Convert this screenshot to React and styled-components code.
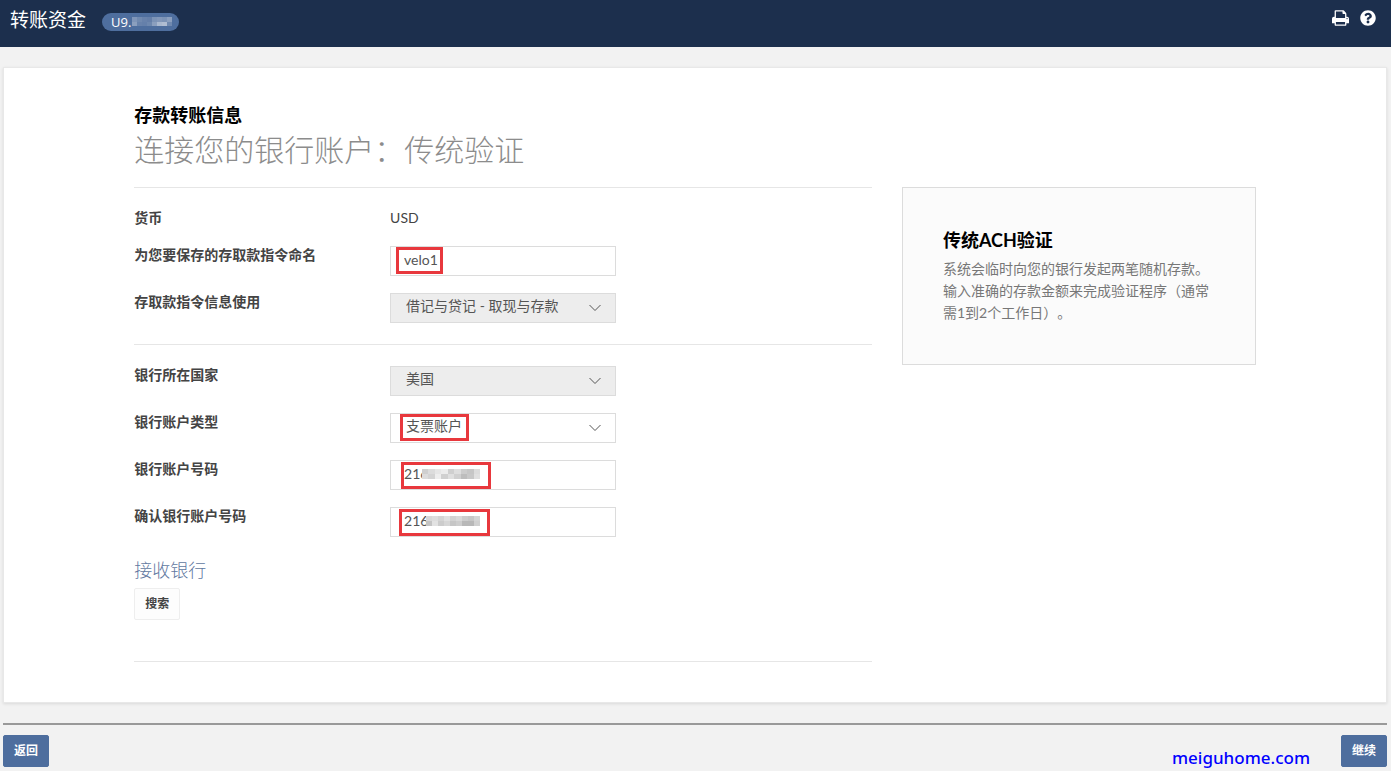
import React, { useState } from "react"
import styled, { createGlobalStyle } from "styled-components"
import { FaQuestionCircle } from "react-icons/fa"

const GlobalStyle = createGlobalStyle`
  * {
    box-sizing: border-box;
  }

  body {
    margin: 0;
    background: #f2f2f2;
    color: #444;
    font-family: Lato, "Noto Sans CJK SC", sans-serif;
    font-size: 14px;
    line-height: 20px;
    text-spacing-trim: space-all;
  }

  h1, h2, h3, p {
    margin: 0;
  }
`

const TopBar = styled.header`
  display: flex;
  align-items: flex-start;
  justify-content: space-between;
  height: 47px;
  padding: 8px 15px 0 10px;
  background: #1c2f4d;
  color: #fff;

  .flex {
    display: flex;
    align-items: center;
    gap: 16px;
  }
  h1 {
    font-size: 19px;
    line-height: 24px;
    font-weight: 400;
  }
`

const AccountPill = styled.span`
  position: relative;
  width: 77px;
  height: 18px;
  margin-top: 4px;
  padding-left: 9px;
  border-radius: 9px;
  background: #4e6e9e;
  font-family: "Open Sans", sans-serif;
  font-size: 13px;
  line-height: 18px;
`

const IconLinks = styled.nav`
  display: flex;
  gap: 11px;
  padding-top: 2px;

  a {
    display: flex;
    color: #fff;
  }
`

const Card = styled.main`
  margin: 20px 4px 0 3px;
  padding: 35px 0 40px;
  border: 1px solid #e8e8e8;
  background: #fff;
  box-shadow: 0 1px 3px rgba(0, 0, 0, 0.1);
`

const Container = styled.div`
  width: 83.3333%;
  margin: 0 auto;
  padding: 0 15px;
`

const Columns = styled.div`
  display: grid;
  grid-template-columns: repeat(12, 1fr);
  column-gap: 30px;
  align-items: start;
  margin-top: 16px;

  form {
    grid-column: span 8;
  }
  aside {
    grid-column: span 4;
  }
`

const Title = styled.h3`
  color: #000;
  font-size: 18px;
  line-height: 24px;
  font-weight: 700;
`

const Subtitle = styled.h2`
  color: #8c8c8c;
  font-size: 30px;
  line-height: 44px;
  font-weight: 300;
`

const Section = styled.div`
  display: grid;
  row-gap: 17px;
  padding: 21px 0;
  border-top: 1px solid #e6e6e6;
`

const Row = styled.div`
  display: grid;
  grid-template-columns: repeat(3, 1fr);
  column-gap: 30px;
  line-height: 18px;

  label, .label {
    font-weight: 700;
  }
`

const Field = styled.div`
  position: relative;
  height: ${props => (props.$plain ? "20px" : "30px")};

  svg.chevron {
    position: absolute;
    top: 11px;
    right: 15px;
    pointer-events: none;
  }
`

const control = `
  display: block;
  width: 100%;
  height: 30px;
  border: 1px solid #dcdcdc;
  border-radius: 0;
  color: #555;
  font-family: inherit;
  font-size: 14px;
  outline: none;
`

const TextInput = styled.input`
  ${control}
  padding: 0 13px 4px;
  background: #fff;
`

const Select = styled.select`
  ${control}
  appearance: none;
  padding: 0 30px 6px 15px;
  background: ${props => (props.disabled ? "#ededed" : "#fff")};
  opacity: 1;
`

const Mark = styled.span`
  position: absolute;
  top: ${props => props.$top}px;
  left: ${props => props.$left}px;
  width: ${props => props.$width}px;
  height: 27px;
  border: 3px solid #e8383d;
  pointer-events: none;
`

const MosaicBox = styled.svg`
  position: absolute;
  top: ${props => props.$top}px;
  left: ${props => props.$left}px;
  pointer-events: none;
`

const BankHeading = styled.h3`
  margin-bottom: 6px;
  color: #5f789f;
  font-size: 18px;
  line-height: 24px;
  font-weight: 300;
`

const BankBlock = styled.div`
  padding-bottom: 41px;
  border-bottom: 1px solid #e6e6e6;
`

const Button = styled.button`
  height: 32px;
  padding: 0 10px;
  border: 1px solid ${props => (props.$primary ? "#4e6e9e" : "#eee")};
  border-radius: 2px;
  background: ${props => (props.$primary ? "#4e6e9e" : "#fdfdfd")};
  color: ${props => (props.$primary ? "#fff" : "#444")};
  font-family: inherit;
  font-size: 12px;
  line-height: 20px;
  font-weight: 700;
`

const InfoBox = styled.aside`
  padding: 40px;
  border: 1px solid #dcdcdc;
  background: #fbfbfb;
  color: #777;

  p {
    margin-top: 6px;
    line-height: 22px;
  }
`

const Footer = styled.footer`
  display: flex;
  justify-content: space-between;
  margin: 20px 4px 0 3px;
  padding: 10px 0 4px;
  border-top: 2px solid #999;
`

const Watermark = styled.span`
  margin: 13px 31px 0 auto;
  color: #0000ff;
  font-family: "Noto Sans", sans-serif;
  font-size: 17px;
  line-height: 20px;
  font-weight: 500;
`

const Mosaic = ({ rows, width, height, top, left }) => {
  const w = width / rows[0].length
  const h = height / rows.length
  return (
    <MosaicBox $top={top} $left={left} width={width} height={height} shapeRendering="crispEdges" aria-hidden="true">
      {rows.map((row, y) =>
        row.map((fill, x) => (
          <rect key={`${x}-${y}`} x={x * w} y={y * h} width={w + 1} height={h + 1} fill={fill} />
        ))
      )}
    </MosaicBox>
  )
}

const pillRows = [
  ["#7f95b8", "#7089af", "#6882ab", "#657fa9", "#7c93b6", "#8297b9", "#7c93b6", "#8b9fbe"],
  ["#8b9fbe", "#6882ab", "#6580aa", "#6d87ae", "#8b9fbe", "#a9b8cf", "#b0bdd2", "#7089af"],
]

const numberRows = [
  ["#cfcfcf", "#dcdcdc", "#e6e6e6", "#ececec", "#cfcfcf", "#dedede", "#cccccc", "#c6c6c6", "#dcdcdc"],
  ["#dcdcdc", "#d4d4d4", "#eeeeee", "#d0d0d0", "#dfdfdf", "#d0d0d0", "#bdbdbd", "#c8c8c8", "#e0e0e0"],
]

const confirmRows = [
  ["#d8d8d8", "#dddddd", "#d4d4d4", "#e0e0e0", "#d2d2d2", "#d9d9d9", "#cccccc", "#c6c6c6", "#d4d4d4"],
  ["#c4c4c4", "#e2e2e2", "#cccccc", "#d6d6d6", "#c6c6c6", "#cdcdcd", "#b8b8b8", "#b8b8b8", "#d0d0d0"],
]

const Chevron = () => (
  <svg className="chevron" width="12" height="8" viewBox="0 0 12 8" fill="none" stroke="#555" aria-hidden="true">
    <path d="M0.5 1L6 6.5L11.5 1" />
  </svg>
)

const PrintIcon = () => (
  <svg width="17" height="16" viewBox="64 128 1664 1536" fill="currentColor" aria-hidden="true">
    <path d="M448 1536h896v-256h-896v256zM448 896h896v-384h-160q-40 0-68-28t-28-68v-160h-640v640zM1600 960q0-26-19-45t-45-19-45 19-19 45 19 45 45 19 45-19 19-45zM1728 960v416q0 13-9.5 22.5t-22.5 9.5h-224v160q0 40-28 68t-68 28h-960q-40 0-68-28t-28-68v-160h-224q-13 0-22.5-9.5t-9.5-22.5v-416q0-79 56.5-135.5t135.5-56.5h64v-544q0-40 28-68t68-28h672q40 0 88 20t76 48l152 152q28 28 48 76t20 88v256h64q79 0 135.5 56.5t56.5 135.5z" />
  </svg>
)

const App = () => {
  const [name, setName] = useState("velo1")
  const [account, setAccount] = useState("216")
  const [confirm, setConfirm] = useState("216")

  return (
    <>
      <GlobalStyle />
      <TopBar>
        <div className="flex">
          <h1>转账资金</h1>
          <AccountPill>
            U9.
            <Mosaic rows={pillRows} width={40} height={9} top={4} left={30} />
          </AccountPill>
        </div>
        <IconLinks>
          <a href="#print" aria-label="打印"><PrintIcon /></a>
          <a href="#help" aria-label="帮助"><FaQuestionCircle size={16} /></a>
        </IconLinks>
      </TopBar>
      <Card>
        <Container>
          <Title>存款转账信息</Title>
          <Subtitle>连接您的银行账户：传统验证</Subtitle>
          <Columns>
            <form onSubmit={e => e.preventDefault()}>
              <Section>
                <Row>
                  <span className="label">货币</span>
                  <Field $plain>USD</Field>
                </Row>
                <Row>
                  <label htmlFor="name">为您要保存的存取款指令命名</label>
                  <Field>
                    <TextInput id="name" value={name} onChange={e => setName(e.target.value)} />
                    <Mark $top={1} $left={6} $width={47} />
                  </Field>
                </Row>
                <Row>
                  <label htmlFor="usage">存取款指令信息使用</label>
                  <Field>
                    <Select id="usage" disabled>
                      <option>借记与贷记 - 取现与存款</option>
                    </Select>
                    <Chevron />
                  </Field>
                </Row>
              </Section>
              <Section>
                <Row>
                  <label htmlFor="country">银行所在国家</label>
                  <Field>
                    <Select id="country" disabled>
                      <option>美国</option>
                    </Select>
                    <Chevron />
                  </Field>
                </Row>
                <Row>
                  <label htmlFor="type">银行账户类型</label>
                  <Field>
                    <Select id="type">
                      <option>支票账户</option>
                    </Select>
                    <Chevron />
                    <Mark $top={1} $left={10} $width={69} />
                  </Field>
                </Row>
                <Row>
                  <label htmlFor="account">银行账户号码</label>
                  <Field>
                    <TextInput id="account" value={account} onChange={e => setAccount(e.target.value)} />
                    <Mosaic rows={numberRows} width={58} height={10} top={9} left={32} />
                    <Mark $top={2} $left={11} $width={90} />
                  </Field>
                </Row>
                <Row>
                  <label htmlFor="confirm">确认银行账户号码</label>
                  <Field>
                    <TextInput id="confirm" value={confirm} onChange={e => setConfirm(e.target.value)} />
                    <Mosaic rows={confirmRows} width={54} height={10} top={9} left={36} />
                    <Mark $top={2} $left={9} $width={91} />
                  </Field>
                </Row>
              </Section>
              <BankBlock>
                <BankHeading>接收银行</BankHeading>
                <Button type="button">搜索</Button>
              </BankBlock>
            </form>
            <InfoBox>
              <Title>传统ACH验证</Title>
              <p>系统会临时向您的银行发起两笔随机存款。输入准确的存款金额来完成验证程序（通常需1到2个工作日）。</p>
            </InfoBox>
          </Columns>
        </Container>
      </Card>
      <Footer>
        <Button type="button" $primary>返回</Button>
        <Watermark>meiguhome.com</Watermark>
        <Button type="button" $primary>继续</Button>
      </Footer>
    </>
  )
}

export default App
